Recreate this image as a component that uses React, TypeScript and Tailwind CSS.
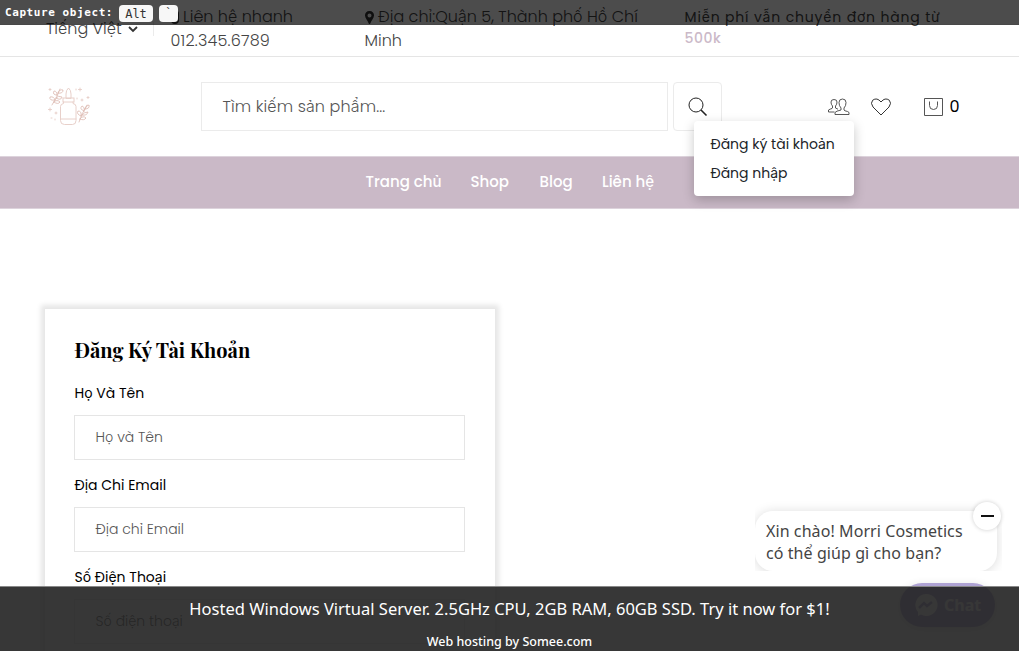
import React from "react";

function Logo() {
  return (
    <svg viewBox="0 0 42 42" className="ml-[48px] mt-[2px] h-[42px] w-[42px] shrink-0" fill="none" stroke="#e8d0ca" strokeWidth="1" strokeLinecap="round">
      <path d="M18 11v-4q0-4 2.500-6q2.500 2 2.500 6v4z" />
      <rect x="15" y="11" width="11" height="4" />
      <path d="M15.500 15v1.500q-3 .5-3 3v14q0 4 4 4h8q3.500 0 3.500-4v-14q0-2.500-3-3V15" />
      <path d="M13 32h15" />
      <g stroke="#dcb9b0" strokeWidth="0.8">
        <path d="M4 18Q9 11 12 2M7 13q-6 1-5-3q4-1 5 3zM8 11q5 3 6-1q-4-2-6 1zM9 8q-5 0-3-4q3 0 3 4zM10 6q5 1 5-3q-4-1-5 3zM6 15q4 3 6 0q-3-3-6 0z" />
        <path d="M31 35Q34 26 39 18M33 29q-5-2-3-5q4 0 3 5zM34 28q5 1 6-3q-4 0-6 3zM36 24q-5-2-2-5q3 1 2 5zM37 22q5 0 4-4q-3 0-4 4zM32 32q4 2 6-1q-3-3-6 1z" />
      </g>
      <path d="M2 1.500v2M1 2.500h2M28 2v1M32 1v3M30.500 2.500h3M40 9.500v2M39 10.500h2M2 21v3M.5 22.500h3M8 25v2M7 26h2M3 31h1M34 12v2M33 13h2M29 11v1M7 32v1" />
    </svg>
  );
}

const fields = [
  { label: "Họ Và Tên", hint: "Họ và Tên" },
  { label: "Địa Chỉ Email", hint: "Địa chỉ Email" },
  { label: "Số Điện Thoại", hint: "Số điện thoại" },
];

export default function App() {
  return (
    <div className="relative h-[651px] w-full overflow-hidden bg-white font-['Poppins',Inter,sans-serif] text-[#444]">
      <div className="flex h-[57px] items-start border-b border-[#e5e5e5] text-[16px] font-light leading-6">
        <div className="ml-[46px] mt-[17px] flex w-[108px] items-center whitespace-nowrap">
          <span>Tiếng Việt</span>
          <svg viewBox="0 0 10 7" className="ml-[6px] h-[7px] w-[10px]" fill="none" stroke="#333" strokeWidth="1.8"><path d="M1 1l4 4 4-4" /></svg>
          <span className="ml-auto h-[14px] w-px bg-[#ebebeb]" />
        </div>
        <div className="ml-[16.500px] mt-[5px] w-[194px] whitespace-nowrap">
          <div className="flex items-center"><span className="mr-[4.500px] h-[14px] w-[8px] rounded-sm border border-b-2 border-[#333]" /><span>Liên hệ nhanh</span></div>
          <div className="tracking-[0.200px]">012.345.6789</div>
        </div>
        <div className="mt-[5px] w-[320px] whitespace-nowrap">
          <div className="flex items-center">
            <svg viewBox="0 0 9 13" className="mr-[4.500px] h-[13px] w-[9px]" fill="#333"><path fillRule="evenodd" d="M4.500 0A4.300 4.300 0 0 1 9 4.500C9 7 6 10 5.300 12.500Q4.500 13.500 3.700 12.500C3 10 0 7 0 4.500A4.300 4.300 0 0 1 4.500 0zM4.500 2.500a2 2 0 1 0 0 4a2 2 0 0 0 0-4z" /></svg>
            <span>Địa chỉ:Quận 5, Thành phố Hồ Chí</span>
          </div>
          <div>Minh</div>
        </div>
        <div className="mt-[7px] whitespace-nowrap text-[14px] font-normal leading-[21px]">
          <div className="tracking-[0.830px]">Miễn phí vẫn chuyển đơn hàng từ</div>
          <div className="font-medium tracking-[0.500px] text-[#cbb9c8]">500k</div>
        </div>
      </div>

      <div className="flex h-[99px] items-center">
        <Logo />
        <div className="ml-[111px] flex h-[49px] w-[467px] items-center border border-[#ebebeb] pl-[20.500px] text-[16px] font-light tracking-[0.120px] text-[#555]">Tìm kiếm sản phẩm...</div>
        <div className="ml-[5px] flex h-[49px] w-[49px] items-center justify-center rounded border border-[#ebebeb]">
          <svg viewBox="0 0 20 20" className="h-5 w-5" fill="none" stroke="#222"><circle cx="8" cy="8" r="7" /><path d="M13 13l5.500 5.500" strokeWidth="1.600" /></svg>
        </div>
        <svg viewBox="0 0 22 18" className="ml-[106px] h-[18px] w-[22px]" fill="none" stroke="#444" strokeWidth="0.9">
          <path d="M7 16.500h14v-2q-1-1.200-4-1.700l-1-.8v-2q2-2 2-5.500q0-3.500-3.500-3.500T11 4.500q0 3.500 2 5.500v2q-5 1-6 2.500z" />
          <path d="M6.500 14H.5v-2q1.500-1 3.500-1.500l.5-.5V8Q3 6.500 3 4q0-2.500 3-2.500q3 0 3 2.500q0 2.500-1.500 4v2l2.500 1.200" />
        </svg>
        <svg viewBox="0 0 20 18" className="ml-[21px] h-[18px] w-[20px]" fill="none" stroke="#333"><path d="M10 17L2 9Q-1 5 1.700 2.200Q6-1 10 4Q14-1 18.300 2.200Q21 5 18 9z" /></svg>
        <svg viewBox="0 0 20 20" className="ml-[33px] h-5 w-5" fill="none" stroke="#555"><path d="M.5 1.500h18v17H.5zM5.500 4.500v4q0 4 4 4t4-4v-4" /></svg>
        <span className="ml-[5.500px] text-[16px] text-black">0</span>
      </div>

      <nav className="flex h-[53px] items-center border-y border-[#ddd3dc] bg-[#cab9c7] pl-[365.500px] text-[15px] font-medium text-white">
        <span className="w-[105px]">Trang chủ</span><span className="w-[69px]">Shop</span><span className="w-[62.500px]">Blog</span><span>Liên hệ</span>
      </nav>

      <main className="ml-[45px] mt-[100px] h-[400px] w-[450px] bg-white px-[29.500px] pt-[27px] text-black shadow-[0_0_5px_4px_#e6e6e6]">
        <h1 className="h-[30px] whitespace-nowrap font-['Playfair_Display','Liberation_Serif',serif] text-[20px] font-bold leading-[28px]">Đăng Ký Tài Khoản</h1>
        {fields.map((f) => (
          <div key={f.label} className="h-[92px] pt-[17px]">
            <div className="h-[32px] text-[14px] leading-[20px]">{f.label}</div>
            <div className="-ml-[0.500px] flex h-[45px] w-[391px] items-center border border-[#e5e5e5] pl-[20.500px] text-[14px] font-light text-[#555]">{f.hint}</div>
          </div>
        ))}
      </main>

      <div className="absolute left-[694px] top-[121px] h-[75px] w-[160px] whitespace-nowrap rounded bg-white px-[16.500px] pt-[9px] text-[14px] font-normal leading-[29px] text-[#212529] shadow-[0_4px_12px_rgba(0,0,0,0.22)]">
        <div>Đăng ký tài khoản</div><div>Đăng nhập</div>
      </div>

      <div className="absolute left-[755px] top-[500px] h-[71px] w-[247px] overflow-hidden pt-[11px] font-['Segoe_UI','Noto_Sans',sans-serif]">
        <div className="h-[60px] w-[242px] whitespace-nowrap rounded-[18px] bg-white pl-[11px] pt-[9px] text-[16px] leading-[22px] tracking-[0.080px] text-[#444] shadow-[0_1px_12px_rgba(0,0,0,0.15)]">
          <div>Xin chào! Morri Cosmetics</div><div>có thể giúp gì cho bạn?</div>
        </div>
      </div>
      <div className="absolute left-[973px] top-[502px] flex h-7 w-7 items-center justify-center rounded-full bg-white shadow-[0_0_4px_rgba(0,0,0,0.2)]"><span className="h-[2px] w-[13px] bg-[#111]" /></div>
      <div className="absolute left-[900px] top-[583px] flex h-[44px] w-[95px] items-center rounded-full bg-[#afa3d4] pl-[14px] font-['Segoe_UI','Noto_Sans',sans-serif] text-[16px] font-bold text-white shadow-[0_2px_10px_rgba(0,0,0,0.12)]">
        <svg viewBox="0 0 24 24" className="mr-[6px] h-6 w-6"><path fill="#fff" d="M12 1A11 11 0 1 1 7 21.500L4 23v-4A11 11 0 0 1 12 1z" /><path d="M5 15l5-5 3 3 5-4" fill="none" stroke="#afa3d4" strokeWidth="2.500" /></svg>Chat
      </div>

      <div className="absolute left-0 top-0 flex h-[25px] w-full items-center border-b border-black/5 bg-black/70 pl-[5px] pt-[3px] font-['DejaVu_Sans_Mono',monospace] text-[11px] font-bold text-white">
        <span className="w-[114px] whitespace-nowrap tracking-[0.580px]">Capture object:</span>
        <span className="flex h-[17px] w-[34px] items-center justify-center rounded-sm bg-[#f7f7f7] text-[12px] font-normal text-[#333]">Alt</span>
        <span className="ml-[6px] flex h-[17px] w-[19px] items-center justify-center rounded-sm bg-[#f7f7f7] font-normal text-[#333]">`</span>
      </div>
      <footer className="absolute bottom-0 left-0 flex h-[65px] w-full flex-col items-center whitespace-nowrap border-t border-[#888] bg-[#212121]/90 font-['Segoe_UI','Noto_Sans',sans-serif] text-white">
        <div className="mt-[10px] text-[16.500px] leading-6">Hosted Windows Virtual Server. 2.5GHz CPU, 2GB RAM, 60GB SSD. Try it now for $1!</div>
        <div className="mt-[12px] text-[12.500px] font-medium leading-[18px]">Web hosting by Somee.com</div>
      </footer>
    </div>
  );
}
